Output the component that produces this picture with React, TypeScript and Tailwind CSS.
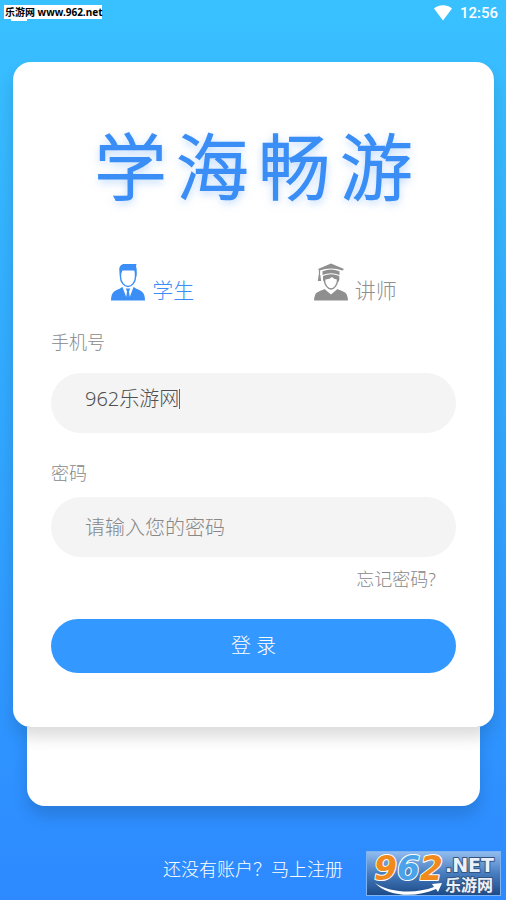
import React, { FC, useState } from "react";

const LOGO_CHARS = ["学", "海", "畅", "游"];

const StudentIcon: FC = () => (
  <svg className="w-9 h-10" viewBox="0 0 36 40" fill="none">
    <path
      d="M10.5 10V15C10.5 20 14.2 24.5 18 24.5S25.5 20 25.5 15V10"
      stroke="currentColor"
      strokeWidth="1.4"
    />
    <path
      d="M10 15L9.3 8.5C9 4.5 11 2 14.5 2H26.5L26 4.5C26.8 6 27 9 26.500 15L25 11L24.2 8.5H12.5L11.3 11Z"
      fill="currentColor"
    />
    <path
      d="M12.5 25C9 27.5 4 28.5 2.5 31.5C1.4 33.5 1 36 1 38.5H35C35 36 34.6 33.5 33.5 31.5C32 28.5 27 27.5 23.5 25L19.8 35L19 29.5L20.2 26.5H15.8L17 29.5L16.2 35Z"
      fill="currentColor"
    />
  </svg>
);

const LecturerIcon: FC = () => (
  <svg className="w-9 h-10" viewBox="0 0 36 40" fill="none">
    <path d="M18 1.5L31 7L29.5 8.5Q18 4.5 6.5 8.5L5 7Z" fill="currentColor" />
    <path d="M9.5 9.3Q18 5.8 26.5 9.3V13Q18 9.5 9.5 13Z" fill="currentColor" />
    <path d="M6.5 7.5V14" stroke="currentColor" strokeWidth="1.2" />
    <path d="M5.7 13H7.3L8.2 19H4.8Z" fill="currentColor" />
    <path
      d="M10 14V18L11.5 21L12.5 17.5Q17 17 19 15Q21 17 23.8 17.5L24.8 21L26.3 18V14Q18 10.5 10 14Z"
      fill="currentColor"
    />
    <path
      d="M11.5 18C11.5 23 15 27 18 27S24.5 23 24.5 18"
      stroke="currentColor"
      strokeWidth="1.3"
    />
    <path
      d="M11.5 27C8 29 3.5 29.5 2.3 32.5C1.5 34.5 1 36.5 1 38.5H35C35 36.5 34.5 34.5 33.7 32.5C32.5 29.5 28 29 24.5 27L18 32.5Z"
      fill="currentColor"
    />
  </svg>
);

const SiteBadge: FC = () => (
  <svg
    className="absolute right-[5px] bottom-[5px] w-[135px] h-[45px] overflow-visible"
    viewBox="0 0 135 45"
    role="img"
    aria-label="962.NET 乐游网"
  >
    <defs>
      <linearGradient id="badge" x1="0" y1="0" x2="0" y2="1">
        <stop offset="0" stopColor="#93bdf0" />
        <stop offset="0.5" stopColor="#477dbf" />
        <stop offset="1" stopColor="#1c4987" />
      </linearGradient>
    </defs>
    <rect x="0.5" y="0.5" width="134" height="44" fill="url(#badge)" stroke="#7fb2f0" />
    <g
      fontFamily="DejaVu Sans, sans-serif"
      fontWeight="700"
      fontStyle="italic"
      fontSize="33"
      stroke="#ffffff"
      strokeWidth="2"
      paintOrder="stroke"
      strokeLinejoin="round"
    >
      <text x="8" y="29">
        <tspan fill="#f08a1d">9</tspan>
        <tspan fill="#4aa3e8">6</tspan>
        <tspan fill="#f08a1d">2</tspan>
      </text>
    </g>
    <path d="M9 32C24 42 50 43 68 36L66 33L76 32L72 41L70 38C50 47 22 46 9 32Z" fill="#ffffff" />
    <g fill="#eaf1fa" stroke="#33547f" strokeWidth="2" paintOrder="stroke" strokeLinejoin="round">
      <text x="79" y="21" fontFamily="DejaVu Sans, sans-serif" fontWeight="700" fontSize="19">
        .NET
      </text>
      <text x="79" y="40" fontFamily="Noto Sans CJK SC, sans-serif" fontWeight="700" fontSize="16">
        乐游网
      </text>
    </g>
  </svg>
);

interface RoleOptionProps {
  label: string;
  value: string;
  checked: boolean;
  onSelect: (value: string) => void;
  children: React.ReactNode;
}

const RoleOption: FC<RoleOptionProps> = ({ label, value, checked, onSelect, children }) => (
  <label
    className={`relative flex items-end justify-center gap-1.5 cursor-pointer ${
      checked ? "text-[#3a8ef6]" : "text-[#8f8f8f]"
    }`}
  >
    <input
      type="radio"
      name="role"
      value={value}
      checked={checked}
      onChange={() => onSelect(value)}
      className="sr-only"
    />
    {children}
    <span className="text-[21px] leading-6">{label}</span>
  </label>
);

export default function App() {
  const [role, setRole] = useState("student");
  const [phone, setPhone] = useState("962乐游网");

  return (
    <div className="relative min-h-screen bg-linear-to-b from-[#39c1ff] to-[#2e89ff] font-['Noto_Sans','Noto_Sans_CJK_SC',sans-serif] font-light">
      {/* STATUS BAR */}
      <header className="flex items-start justify-between h-[62px] pl-1 pr-2 pt-[5px]">
        <div>
          <div className="bg-white text-black pl-px text-[10px] leading-[14px] font-bold whitespace-nowrap">
            乐游网 www.962.net
          </div>
          <div className="ml-[7px] w-4 h-0.5 bg-white" />
        </div>
        <div className="flex items-center gap-2 text-white">
          <svg className="w-[18px] h-4" viewBox="0 0 18 16" fill="currentColor">
            <path d="M9 15.5L0 3.5C5 -0.8 13 -0.8 18 3.5Z" />
          </svg>
          <span className="font-['Roboto',sans-serif] font-medium text-[15px] leading-4">12:56</span>
        </div>
      </header>

      <main>
        {/* LOGIN CARD */}
        <form
          className="relative z-10 ml-[13px] mr-3 px-[38px] pt-16 pb-[54px] bg-white rounded-[18px] shadow-[0_10px_16px_rgba(0,0,0,0.14)]"
          onSubmit={(e) => e.preventDefault()}
        >
          <h1 className="flex justify-center gap-2.5 text-[72px] leading-[80px] font-light text-[#3a8ef6] [-webkit-text-stroke:2px_#3a8ef6] [stroke-linejoin:round] [text-shadow:0_3px_8px_rgba(58,142,246,0.5)]">
            {LOGO_CHARS.map((char) => (
              <span key={char}>{char}</span>
            ))}
          </h1>

          <div className="grid grid-cols-2 mt-14" role="radiogroup" aria-label="身份">
            <RoleOption label="学生" value="student" checked={role === "student"} onSelect={setRole}>
              <StudentIcon />
            </RoleOption>
            <RoleOption label="讲师" value="lecturer" checked={role === "lecturer"} onSelect={setRole}>
              <LecturerIcon />
            </RoleOption>
          </div>

          <label htmlFor="phone" className="block mt-7 text-[18px] leading-6 text-[#888888]">
            手机号
          </label>
          <div className="flex mt-[19px] h-[60px] px-[34px] pt-3.5 rounded-full bg-[#f4f4f4]">
            <input
              id="phone"
              type="text"
              value={phone}
              onChange={(e) => setPhone(e.target.value)}
              className="field-sizing-content h-6 text-[20px] leading-6 text-[#505050] outline-none caret-transparent"
            />
            <span className="w-px h-5 mt-0.5 bg-[#666666]" />
          </div>

          <label htmlFor="password" className="block mt-7 text-[18px] leading-6 text-[#888888]">
            密码
          </label>
          <input
            id="password"
            type="password"
            placeholder="请输入您的密码"
            className="block w-full mt-3 h-[60px] px-[34px] rounded-full bg-[#f4f4f4] text-[20px] text-[#505050] placeholder:text-[#888888] outline-none"
          />

          <div className="flex justify-end mt-2.5 pr-5">
            <a href="#forgot" className="text-[18px] leading-6 text-[#888888]">
              忘记密码?
            </a>
          </div>

          <button
            type="submit"
            className="block w-full mt-7 h-[54px] rounded-full bg-[#3398ff] text-white text-[20px] cursor-pointer"
          >
            登 录
          </button>
        </form>

        {/* SECOND SHEET BEHIND THE CARD */}
        <div className="ml-[27px] mr-[26px] h-[79px] bg-white rounded-b-[18px] shadow-[0_10px_16px_rgba(0,0,0,0.14)]" />
      </main>

      <footer className="pt-[51px] pb-5 text-center text-[18px] leading-6 text-white">
        还没有账户？
        <a href="#register">马上注册</a>
      </footer>

      <SiteBadge />
    </div>
  );
}
